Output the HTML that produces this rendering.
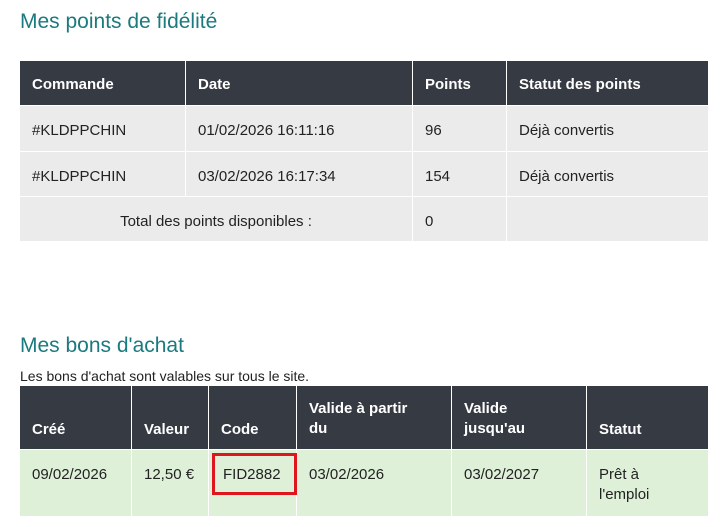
<!DOCTYPE html>
<html><head><meta charset="utf-8"><style>
body{margin:0;width:724px;height:527px;background:#fff;font-family:"Liberation Sans",sans-serif;color:#222;position:relative;overflow:hidden}
.a{position:absolute;box-sizing:border-box}
.h{background:#363a43;color:#fff;font-weight:bold;font-size:15px;padding-left:12px;display:flex;align-items:center;padding-top:2px}
.c{background:#ebebeb;font-size:15px;padding-left:12px;display:flex;align-items:center;padding-top:4px}
.g{background:#def0d8;font-size:15px;padding-left:12px;padding-top:15px;line-height:20px}
.t{color:#1b7a7f;font-size:21px}
</style></head><body>
<div class="a t" style="left:20px;top:10px">Mes points de fidélité</div>

<div class="a h" style="left:20px;top:61px;width:165px;height:44px">Commande</div>
<div class="a h" style="left:186px;top:61px;width:226px;height:44px">Date</div>
<div class="a h" style="left:413px;top:61px;width:93px;height:44px">Points</div>
<div class="a h" style="left:507px;top:61px;width:201px;height:44px">Statut des points</div>

<div class="a c" style="left:20px;top:106px;width:165px;height:45px">#KLDPPCHIN</div>
<div class="a c" style="left:186px;top:106px;width:226px;height:45px">01/02/2026 16:11:16</div>
<div class="a c" style="left:413px;top:106px;width:93px;height:45px">96</div>
<div class="a c" style="left:507px;top:106px;width:201px;height:45px">Déjà convertis</div>

<div class="a c" style="left:20px;top:152px;width:165px;height:44px">#KLDPPCHIN</div>
<div class="a c" style="left:186px;top:152px;width:226px;height:44px">03/02/2026 16:17:34</div>
<div class="a c" style="left:413px;top:152px;width:93px;height:44px">154</div>
<div class="a c" style="left:507px;top:152px;width:201px;height:44px">Déjà convertis</div>

<div class="a c" style="left:20px;top:197px;width:392px;height:44px;justify-content:center;padding-left:0">Total des points disponibles :</div>
<div class="a c" style="left:413px;top:197px;width:93px;height:44px">0</div>
<div class="a c" style="left:507px;top:197px;width:201px;height:44px"></div>

<div class="a t" style="left:20px;top:334px">Mes bons d'achat</div>
<div class="a" style="left:20px;top:368px;font-size:14px">Les bons d'achat sont valables sur tous le site.</div>

<div class="a h" style="left:20px;top:386px;width:111px;height:63px;align-items:flex-end;padding-bottom:11px">Créé</div>
<div class="a h" style="left:132px;top:386px;width:76px;height:63px;align-items:flex-end;padding-bottom:11px">Valeur</div>
<div class="a h" style="left:209px;top:386px;width:87px;height:63px;align-items:flex-end;padding-bottom:11px">Code</div>
<div class="a h" style="left:297px;top:386px;width:154px;height:63px;align-items:flex-start;padding-top:13px;line-height:20px">Valide à partir<br>du</div>
<div class="a h" style="left:452px;top:386px;width:134px;height:63px;align-items:flex-start;padding-top:13px;line-height:20px">Valide<br>jusqu'au</div>
<div class="a h" style="left:587px;top:386px;width:121px;height:63px;align-items:flex-end;padding-bottom:11px">Statut</div>

<div class="a g" style="left:20px;top:450px;width:111px;height:66px">09/02/2026</div>
<div class="a g" style="left:132px;top:450px;width:76px;height:66px">12,50 €</div>
<div class="a g" style="left:209px;top:450px;width:87px;height:66px"></div>
<div class="a" style="left:212px;top:453px;width:85px;height:42px;border:3px solid #e0161e;font-size:15px;padding-left:8px;padding-top:10px;line-height:18px">FID2882</div>
<div class="a g" style="left:297px;top:450px;width:154px;height:66px">03/02/2026</div>
<div class="a g" style="left:452px;top:450px;width:134px;height:66px">03/02/2027</div>
<div class="a g" style="left:587px;top:450px;width:121px;height:66px">Prêt à<br>l'emploi</div>
</body></html>
